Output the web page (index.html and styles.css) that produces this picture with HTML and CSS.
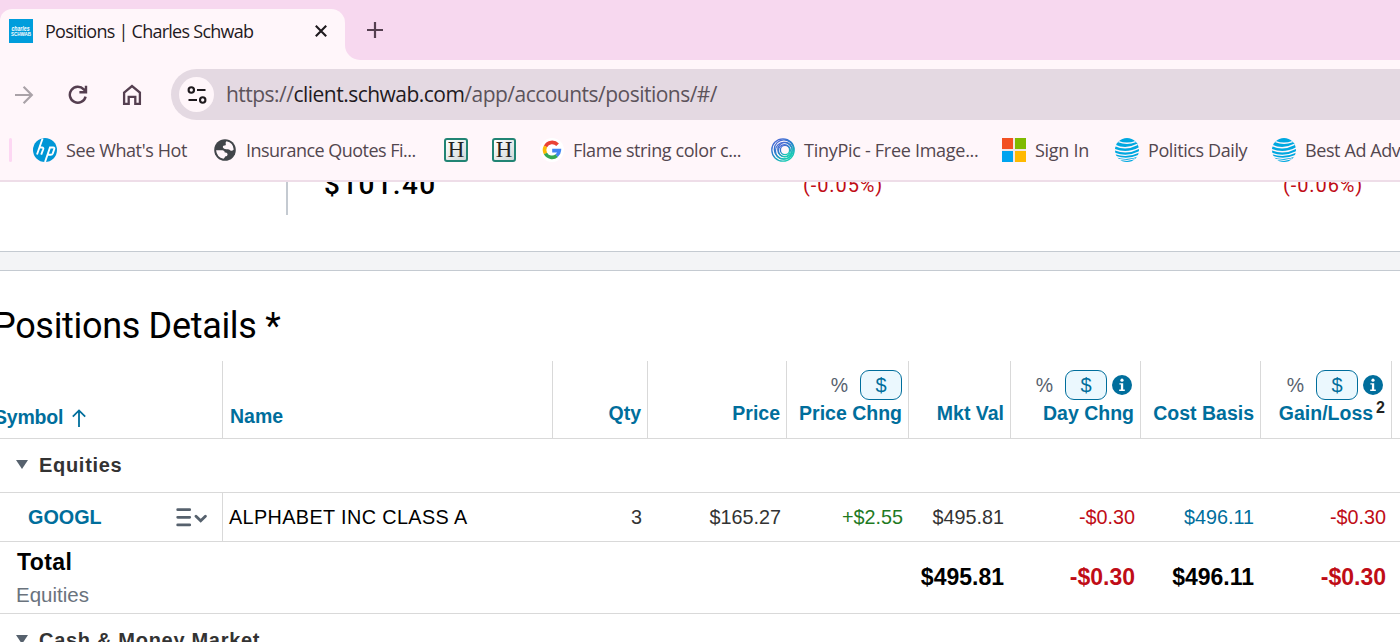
FILE: index.html
```
<!DOCTYPE html>
<html lang="en">
<head>
    <meta charset="UTF-8">
    <title>Positions | Charles Schwab</title>
    <link rel="stylesheet" href="styles.css">
</head>
<body>
    <svg class="defs" width="0" height="0">
        <symbol id="globe-stripes" viewBox="0 0 24 24">
            <circle cx="12" cy="12" r="12" fill="#00a8e0"/>
            <g fill="none" stroke="#fff6fa">
                <path d="M3.5 3.6Q12 7 20.5 3.6" stroke-width="1.4"/>
                <path d="M0 7.4Q11 12.4 22.5 6.4" stroke-width="1.5"/>
                <path d="M-1 11.4Q12 16.8 24.5 9.8" stroke-width="1.5"/>
                <path d="M-1 15.2Q12 20.2 24.5 13.8" stroke-width="1.4"/>
                <path d="M1 18.6Q12 22.6 23.5 17.6" stroke-width="1.3"/>
                <path d="M4 21.4Q12 23.8 20 20.8" stroke-width="1"/>
            </g>
        </symbol>
        <symbol id="info" viewBox="0 0 20 20">
            <circle cx="10" cy="10" r="10" fill="#006e9c"/>
            <circle cx="10" cy="5.2" r="1.6" fill="#fff"/>
            <path d="M7.4 8.2h3.8v6.4h1.6v1.4H7.2v-1.4h1.7v-5H7.4z" fill="#fff"/>
        </symbol>
    </svg>

    <!-- Browser window -->
    <div class="tab-strip">
        <div class="tab">
            <svg class="favicon" width="24" height="24" viewBox="0 0 24 24">
                <rect width="24" height="24" fill="#009ddc"/>
                <text x="2.5" y="11.5" textLength="18" lengthAdjust="spacingAndGlyphs" class="logo-top">charles</text>
                <text x="2" y="17" textLength="20" lengthAdjust="spacingAndGlyphs" class="logo-bottom">SCHWAB</text>
            </svg>
            <span class="tab-title">Positions | Charles Schwab</span>
            <svg class="tab-close" width="12" height="12" viewBox="0 0 12 12"><path d="M.8.8l10.4 10.4M11.2.8L.8 11.2" stroke="#1f1a1e" stroke-width="2.1"/></svg>
        </div>
        <div class="tab-rest">
            <svg width="16" height="16" viewBox="0 0 16 16"><path d="M8 0v16M0 8h16" stroke="#553f50" stroke-width="2.2"/></svg>
        </div>
    </div>

    <div class="toolbar">
        <svg width="20" height="20" viewBox="0 0 20 20" fill="none" stroke="#aaa2a8" stroke-width="2.2"><path d="M1 10h16.5M9.6 1.8L17.8 10l-8.2 8.2"/></svg>
        <svg class="reload" width="20" height="20" viewBox="0 0 20 20" fill="none" stroke="#553f50" stroke-width="2.4"><path d="M17.6 11.6a8 8 0 1 1-1.8-7.2l1.2 1.4M18 .8v6.4h-6.6"/></svg>
        <svg class="home" width="20" height="22" viewBox="0 0 20 22" fill="none" stroke="#553f50" stroke-width="2.3"><path d="M2.1 8.6L10 2.1l7.9 6.5v11.3h-4.6v-7.1H6.7v7.1H2.1z"/></svg>
        <div class="address">
            <div class="site-info">
                <svg width="20" height="18" viewBox="0 0 20 18" fill="none" stroke="#1f1a1e" stroke-width="2.1"><circle cx="4.3" cy="4" r="2.7"/><path d="M10 4h8.5M1.5 14H10"/><circle cx="15.7" cy="14" r="2.7"/></svg>
            </div>
            <span class="url">https://<b>client.schwab.com</b>/app/accounts/positions/#/</span>
        </div>
    </div>

    <div class="bookmarks">
        <div class="separator"></div>
        <div class="bookmark">
            <svg width="24" height="24" viewBox="0 0 24 24"><circle cx="12" cy="12" r="12" fill="#0096d6"/><path d="M9.6.5L4 16.5M5.8 9.5h3.2q1.8 0 1.2 1.8l-2 5.4M12 24l5-14.5h3.2q1.6 0 1 1.8l-1.4 4q-.6 1.5-2 1.5h-3.2" fill="none" stroke="#fff" stroke-width="1.9"/></svg>
            <span>See What's Hot</span>
        </div>
        <div class="bookmark">
            <svg width="24" height="24" viewBox="0 0 24 24"><circle cx="12" cy="12" r="10.8" fill="#414549"/><path d="M13.5 3.2a9 9 0 0 1 7.2 8.3q-1.8 2.3-3.6.7-1-1.2-3.2-1-3.2.2-4-1.6-.5-2 1.3-2.1 2.2 0 1.5-1.8-.4-1.6.8-2.5zM3.1 12.2h6.5q2.2.3 2.2 2.4 2.8-.3 2.8 1.8 0 2-2.5 2-.3 1.5-1.6 2.4-6.8-1.6-7.4-8.6z" fill="#fff6fa"/></svg>
            <span class="tight">Insurance Quotes Fi...</span>
        </div>
        <div class="bookmark"><div class="h-icon">H</div></div>
        <div class="bookmark"><div class="h-icon">H</div></div>
        <div class="bookmark">
            <svg width="24" height="24" viewBox="0 0 24 24"><circle cx="12" cy="12" r="12" fill="#fff"/><g fill="none" stroke-width="3.6"><path d="M17.6 6.8A7.4 7.4 0 0 0 5.5 8.5" stroke="#ea4335"/><path d="M5.5 8.4a7.4 7.4 0 0 0 0 7.2" stroke="#fbbc05"/><path d="M5.5 15.5a7.4 7.4 0 0 0 11.3 2.1" stroke="#34a853"/><path d="M16.6 17.7a7.3 7.3 0 0 0 2.7-5.1H12.2" stroke="#4285f4"/></g></svg>
            <span>Flame string color c...</span>
        </div>
        <div class="bookmark">
            <svg width="24" height="24" viewBox="0 0 24 24" fill="none">
                <defs><linearGradient id="swirl" x1="0" y1="0" x2=".6" y2="1"><stop offset="0" stop-color="#5865d8"/><stop offset=".5" stop-color="#287dcc"/><stop offset="1" stop-color="#18cbb4"/></linearGradient></defs>
                <g stroke="url(#swirl)" stroke-width="1.3"><circle cx="12" cy="12" r="11.2"/><circle cx="12.9" cy="11.4" r="9.6"/><circle cx="12.8" cy="12.8" r="8.4"/><circle cx="14" cy="11.6" r="7.2"/><circle cx="13.4" cy="12.6" r="6"/><circle cx="14" cy="12" r="4.6"/></g>
            </svg>
            <span class="loose">TinyPic - Free Image...</span>
        </div>
        <div class="bookmark">
            <svg width="24" height="24" viewBox="0 0 24 24"><path fill="#f1e6e5" d="M0 0h24v24H0z"/><path fill="#f25022" d="M0 0h11v11H0z"/><path fill="#7fba00" d="M13 0h11v11H13z"/><path fill="#00a4ef" d="M0 13h11v11H0z"/><path fill="#ffb900" d="M13 13h11v11H13z"/></svg>
            <span class="loose">Sign In</span>
        </div>
        <div class="bookmark">
            <svg width="24" height="24"><use href="#globe-stripes"/></svg>
            <span>Politics Daily</span>
        </div>
        <div class="bookmark">
            <svg width="24" height="24"><use href="#globe-stripes"/></svg>
            <span>Best Ad Advice</span>
        </div>
    </div>

    <!-- Page content -->
    <div class="page">
        <div class="summary">
            <div class="summary-side"></div>
            <div class="summary-total"><span>$101.40</span></div>
            <div class="summary-change"><span>(-0.05%)</span></div>
            <div class="summary-change"><span>(-0.06%)</span></div>
        </div>
        <div class="band"></div>
        <h1>Positions Details *</h1>

        <table>
            <colgroup>
                <col class="c-symbol"><col class="c-name"><col class="c-qty"><col class="c-price"><col class="c-pchng"><col class="c-mkt"><col class="c-day"><col class="c-cost"><col class="c-gain"><col>
            </colgroup>
            <thead>
                <tr>
                    <th class="symbol"><span>Symbol</span> <svg width="14" height="18" viewBox="0 0 14 18" fill="none" stroke="#006e9c" stroke-width="1.8"><path d="M7 18V1.5M.8 7.6L7 1.4l6.2 6.2"/></svg></th>
                    <th class="name">Name</th>
                    <th>Qty</th>
                    <th>Price</th>
                    <th><div class="toggle"><span>%</span><button>$</button></div>Price Chng</th>
                    <th>Mkt Val</th>
                    <th><div class="toggle has-info"><span>%</span><button>$</button><svg width="20" height="20"><use href="#info"/></svg></div>Day Chng</th>
                    <th>Cost Basis</th>
                    <th class="gain"><div class="toggle has-info"><span>%</span><button>$</button><svg width="20" height="20"><use href="#info"/></svg></div>Gain/Loss<sup>2</sup></th>
                    <th></th>
                </tr>
            </thead>
            <tbody>
                <tr class="group">
                    <td colspan="10"><i class="caret"></i>Equities</td>
                </tr>
                <tr class="position">
                    <td class="ticker"><div><a>GOOGL</a><svg width="31" height="19" viewBox="0 0 31 19" fill="none" stroke="#56616d" stroke-width="2.8" stroke-linecap="round"><path d="M1.7 1.7h12M1.7 9.3h12M1.7 16.9h12"/><path d="M20 8.2l4.7 4.6 4.7-4.6" stroke-width="2.8"/></svg></div></td>
                    <td class="name">ALPHABET INC CLASS A</td>
                    <td>3</td>
                    <td>$165.27</td>
                    <td class="up">+$2.55</td>
                    <td class="value">$495.81</td>
                    <td class="down">-$0.30</td>
                    <td class="value link">$496.11</td>
                    <td class="down">-$0.30</td>
                    <td></td>
                </tr>
                <tr class="total">
                    <td class="total-label" colspan="5"><strong>Total</strong><span>Equities</span></td>
                    <td class="value">$495.81</td>
                    <td class="down">-$0.30</td>
                    <td class="value">$496.11</td>
                    <td class="down">-$0.30</td>
                    <td></td>
                </tr>
                <tr class="group">
                    <td colspan="10"><i class="caret"></i>Cash &amp; Money Market</td>
                </tr>
            </tbody>
        </table>
    </div>
</body>
</html>
```
FILE: styles.css
```
* {
    box-sizing: border-box;
}

body {
    margin: 0;
    height: 642px;
    overflow: hidden;
    display: flex;
    flex-direction: column;
    background: #fff;
    font-family: "Liberation Sans", Arial, sans-serif;
}

svg {
    display: block;
    flex-shrink: 0;
}

.defs {
    display: none;
}

/* Browser window */
.tab-strip,
.toolbar,
.bookmarks {
    flex-shrink: 0;
    font-family: "Open Sans", "Segoe UI", sans-serif;
    background: #fff6fa;
}

.tab-strip {
    height: 60px;
    display: flex;
    background: linear-gradient(#f7d8ef 30px, #fff6fa 30px);
}

.tab {
    width: 345px;
    height: 51px;
    margin-top: 9px;
    padding: 0 18px 8px 9px;
    display: flex;
    align-items: center;
    background: #fff6fa;
    border-radius: 12px 14px 0 0;
}

.tab-title {
    flex: 1;
    margin-left: 12px;
    font-size: 18px;
    letter-spacing: -0.74px;
    white-space: nowrap;
    color: #1f1a1e;
}

.logo-top,
.logo-bottom {
    fill: #fff;
    font-family: "Liberation Sans", sans-serif;
    font-weight: bold;
    font-size: 7px;
}

.logo-top {
    font-style: italic;
}

.logo-bottom {
    font-size: 5.5px;
}

.tab-rest {
    flex: 1;
    padding: 22px 0 0 22px;
    background: #f7d8ef;
    border-bottom-left-radius: 15px;
}

.toolbar {
    height: 69px;
    padding-left: 14px;
    display: flex;
    align-items: center;
}

.reload {
    margin-left: 34px;
}

.home {
    margin-left: 34px;
}

.address {
    flex: 1;
    height: 51px;
    margin-left: 29px;
    padding-left: 8px;
    display: flex;
    align-items: center;
    background: #e4d9e2;
    border-radius: 26px 0 0 26px;
}

.site-info {
    width: 35px;
    height: 35px;
    display: flex;
    align-items: center;
    justify-content: center;
    background: #fff6fa;
    border-radius: 50%;
}

.url {
    margin-left: 12px;
    padding-bottom: 1px;
    font-size: 21px;
    letter-spacing: -0.52px;
    white-space: nowrap;
    color: #5c535b;
}

.url b {
    font-weight: normal;
    color: #1f1a1e;
}

.bookmarks {
    height: 53px;
    padding: 0 0 9px 9px;
    display: grid;
    grid-template-columns: 24px 180px 231px 48px 48px 231px 231px 113px 157px 140px;
    align-items: center;
    border-bottom: 2px solid #eedde8;
}

.separator {
    width: 3px;
    height: 24px;
    border-radius: 2px;
    background: #fdd7f3;
}

.bookmark {
    height: 24px;
    display: flex;
    align-items: center;
    gap: 9px;
    font-size: 18px;
    letter-spacing: -0.4px;
    white-space: nowrap;
    color: #53474f;
}

.bookmark span {
    padding-bottom: 1px;
}

.bookmark .tight {
    letter-spacing: -0.52px;
}

.bookmark .loose {
    letter-spacing: -0.28px;
}

.h-icon {
    width: 24px;
    height: 24px;
    border: 2px solid #218474;
    border-radius: 3px;
    background: linear-gradient(135deg, #fff, #d2d8d8);
    font: 23px/20px "Liberation Serif", serif;
    letter-spacing: 0;
    display: flex;
    justify-content: center;
    color: #222;
}

/* Account summary */
.page {
    flex: 1;
    overflow: hidden;
}

.summary {
    height: 69px;
    display: flex;
}

.summary > div {
    flex-shrink: 0;
}

.summary span {
    display: block;
    margin-top: -12px;
}

.summary-side {
    width: 288px;
    height: 33px;
    border-right: 2px solid #c4cad1;
}

.summary-total {
    width: 515px;
    padding-left: 36px;
    font: 500 28px/29px Roboto, sans-serif;
    letter-spacing: 1.3px;
    color: #000;
}

.summary-change {
    width: 480px;
    font: 20px/30px Roboto, sans-serif;
    letter-spacing: 0.9px;
    color: #c00d17;
}

.band {
    height: 20px;
    background: #f3f4f6;
    border: solid #c4cad1;
    border-width: 1px 0;
}

h1 {
    margin: 0 0 0 -7px;
    height: 90px;
    padding-top: 33px;
    font: 36px/44px Roboto, sans-serif;
    letter-spacing: -0.32px;
    white-space: nowrap;
    color: #000;
}

/* Positions table */
table {
    width: 1400px;
    table-layout: fixed;
    border-collapse: separate;
    border-spacing: 0;
    font-size: 19.5px;
    color: #333;
}

.c-symbol { width: 223px; }
.c-name { width: 330px; }
.c-qty { width: 95px; }
.c-price { width: 139px; }
.c-pchng { width: 122px; }
.c-mkt { width: 102px; }
.c-day { width: 130px; }
.c-cost { width: 120px; }
.c-gain { width: 131px; }

th,
td {
    padding: 0 6px 0 0;
    border-bottom: 1px solid #d9d9d9;
    text-align: right;
    white-space: nowrap;
}

th {
    height: 78px;
    padding-bottom: 13px;
    border-right: 1px solid #d9d9d9;
    vertical-align: bottom;
    line-height: 24px;
    color: #006e9c;
}

th:last-child {
    border-right: 0;
}

th.symbol {
    padding-bottom: 9px;
    text-align: left;
    letter-spacing: -0.2px;
}

th.symbol span {
    margin-left: -6px;
}

th.symbol svg {
    display: inline-block;
    margin-left: 4px;
    vertical-align: -3px;
}

.name {
    padding-left: 7px;
    text-align: left;
}

th.name {
    padding-bottom: 10px;
}

.toggle {
    display: flex;
    align-items: center;
    justify-content: flex-end;
    height: 30px;
    margin-bottom: 1px;
    font-weight: normal;
    color: #56616d;
}

.toggle button {
    width: 42px;
    height: 30px;
    margin-left: 12px;
    padding: 0;
    border: 1px solid #006e9c;
    border-radius: 9px;
    background: #ebf8fe;
    font: 20px "Liberation Sans", Arial, sans-serif;
    color: #006e9c;
}

.toggle svg {
    margin-left: 5px;
}

.has-info {
    margin-right: 2px;
}

.gain sup {
    margin-left: 3px;
    font-size: 16px;
    line-height: 0;
    color: #222;
}

.group td {
    height: 54px;
    padding-left: 16px;
    text-align: left;
    font-size: 20px;
    font-weight: bold;
    letter-spacing: 0.7px;
}

.caret {
    display: inline-block;
    margin-right: 11px;
    border: solid transparent;
    border-width: 9px 6px 0;
    border-top-color: #56616d;
    vertical-align: 3px;
}

.position td {
    height: 49px;
    font-size: 19.8px;
}

.position .ticker {
    padding: 0 15px 0 28px;
    border-right: 1px solid #d9d9d9;
}

.ticker div {
    display: flex;
    align-items: center;
    justify-content: space-between;
}

.ticker a {
    font-weight: bold;
    color: #006e9c;
}

.position .name {
    padding-left: 6px;
    letter-spacing: 0.4px;
    color: #000;
}

td.up {
    color: #1f7a1f;
}

td.link {
    color: #006e9c;
}

.total td {
    height: 72px;
    font-size: 23px;
    font-weight: bold;
    color: #000;
}

td.value {
    padding-right: 7px;
}

.position td.link {
    color: #006e9c;
}

.position td.down,
.total td.down {
    color: #c00d17;
}

.total .total-label {
    padding-left: 16px;
    text-align: left;
}

.total-label strong,
.total-label span {
    display: block;
    line-height: 32px;
}

.total-label strong {
    padding-left: 1px;
    letter-spacing: 0.4px;
}

.total-label span {
    font-size: 20.5px;
    line-height: 33px;
    margin-bottom: -1px;
    font-weight: normal;
    color: #6a737d;
}
```
